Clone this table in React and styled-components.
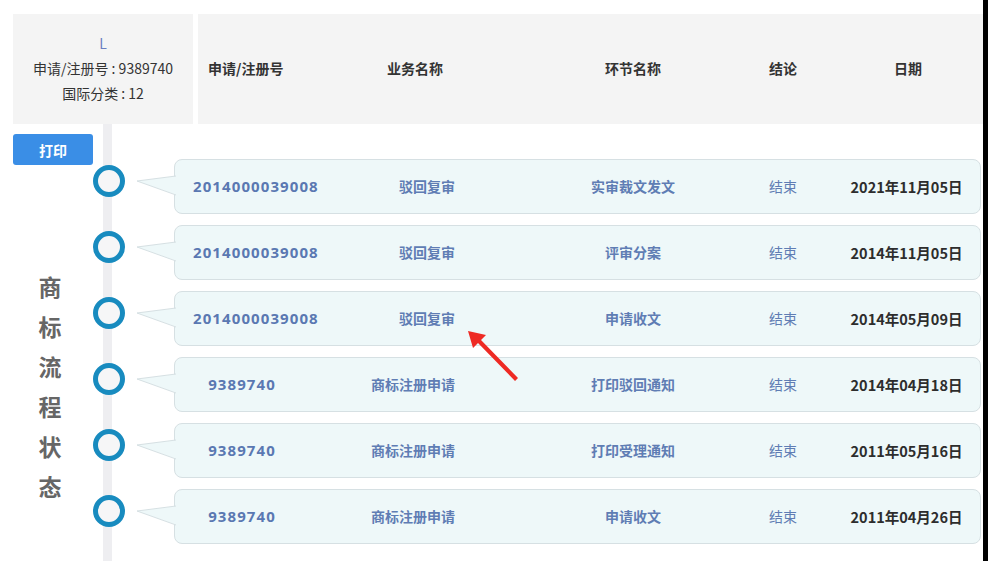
import React from "react";
import styled, { createGlobalStyle } from "styled-components";

const GlobalStyle = createGlobalStyle`
  html, body { margin: 0; padding: 0; background: #fff; }
  body { font-family: "Noto Sans CJK SC", "Noto Sans", sans-serif; color: #333; }
  * { box-sizing: border-box; }
`;

const Page = styled.div`
  width: 988px;
  height: 561px;
  display: flex;
  overflow: hidden;
`;

const Main = styled.div`
  flex: 1;
  padding: 14px 0 0 13px;
  display: flex;
  flex-direction: column;
`;

const EdgeStrip = styled.div`
  width: 5px;
  background: #000;
`;

const HeaderRow = styled.div`
  display: flex;
  gap: 5px;
  height: 110px;
`;

const InfoBox = styled.div`
  width: 180px;
  background: #f4f4f4;
  display: flex;
  flex-direction: column;
  align-items: center;
  justify-content: center;
  font-size: 14px;
  line-height: 25px;
  color: #333;
  padding-bottom: 2px;
`;

const InfoMark = styled.div`
  color: #6c7fc0;
`;

const HeaderGrid = styled.div`
  flex: 1;
  background: #f4f4f4;
  display: grid;
  grid-template-columns: 89px 236px 200px 100px 150px;
  align-items: center;
  padding-left: 10px;
  padding-bottom: 3px;
  font-size: 14px;
  font-weight: 700;
  color: #333;
`;

const HeadCell = styled.div`
  text-align: ${(p) => (p.$left ? "left" : "center")};
  white-space: nowrap;
`;

const Body = styled.div`
  flex: 1;
  display: flex;
`;

const Sidebar = styled.div`
  width: 80px;
  display: flex;
  flex-direction: column;
  align-items: center;
`;

const PrintButton = styled.button`
  width: 80px;
  height: 31px;
  margin-top: 10px;
  border: none;
  border-radius: 3px;
  background: #3a8ee6;
  color: #fff;
  font-family: inherit;
  font-size: 14px;
  font-weight: 700;
  padding: 0;
`;

const VerticalLabel = styled.div`
  margin-top: 101px;
  margin-right: 6px;
  width: 24px;
  font-size: 23px;
  line-height: 40px;
  font-weight: 700;
  color: #666;
  text-align: center;
  word-break: break-all;
`;

const Timeline = styled.div`
  flex: 1;
  padding-top: 35px;
  display: flex;
  flex-direction: column;
  gap: 11px;
  background: linear-gradient(
    to right,
    transparent 10px,
    #eeeef1 10px,
    #eeeef1 19px,
    transparent 19px
  );
`;

const Row = styled.div`
  display: flex;
  align-items: flex-start;
`;

const Marker = styled.div`
  width: 32px;
  height: 32px;
  margin-top: 6px;
  border-radius: 50%;
  border: 5px solid #188bbf;
  background: #f6f6f7;
  flex-shrink: 0;
`;

const Card = styled.div`
  position: relative;
  flex: 1;
  height: 55px;
  margin-left: 49px;
  margin-right: 2px;
  border: 1px solid #d6e0e3;
  border-radius: 8px;
  background: #eef8f9;
  display: grid;
  grid-template-columns: 98px 242px 200px 100px 1fr;
  align-items: center;
  padding-left: 18px;
  padding-bottom: 1px;
  font-size: 14px;
`;

const Tail = styled.svg`
  position: absolute;
  left: -38px;
  top: -1px;
  width: 40px;
  height: 55px;
  overflow: visible;
`;

const NumCell = styled.div`
  text-align: center;
  white-space: nowrap;
  font-family: "Open Sans", "Noto Sans CJK SC", sans-serif;
  font-size: 15px;
  font-weight: 700;
  color: #5a78b2;
  letter-spacing: 1.1px;
`;

const BizCell = styled.div`
  text-align: right;
  padding-right: 78px;
  white-space: nowrap;
  font-weight: 700;
  color: #5f7db4;
`;

const StepCell = styled.div`
  text-align: center;
  white-space: nowrap;
  font-weight: 700;
  color: #5f7db4;
`;

const ResultCell = styled.div`
  text-align: center;
  color: #5f7db4;
`;

const DateCell = styled.div`
  text-align: center;
  white-space: nowrap;
  font-size: 14.5px;
  font-weight: 700;
  color: #2d2d2d;
`;

const rows = [
  ["2014000039008", "驳回复审", "实审裁文发文", "结束", "2021年11月05日"],
  ["2014000039008", "驳回复审", "评审分案", "结束", "2014年11月05日"],
  ["2014000039008", "驳回复审", "申请收文", "结束", "2014年05月09日"],
  ["9389740", "商标注册申请", "打印驳回通知", "结束", "2014年04月18日"],
  ["9389740", "商标注册申请", "打印受理通知", "结束", "2011年05月16日"],
  ["9389740", "商标注册申请", "申请收文", "结束", "2011年04月26日"],
];

const Arrow = styled.svg`
  position: absolute;
  left: 462px;
  top: 327px;
  width: 60px;
  height: 56px;
`;

const Stage = styled.div`
  position: relative;
`;

export default function App() {
  return (
    <>
      <GlobalStyle />
      <Stage>
        <Page>
          <Main>
            <HeaderRow>
              <InfoBox>
                <InfoMark>L</InfoMark>
                <div>申请/注册号 : 9389740</div>
                <div>国际分类 : 12</div>
              </InfoBox>
              <HeaderGrid>
                <HeadCell $left>申请/注册号</HeadCell>
                <HeadCell>业务名称</HeadCell>
                <HeadCell>环节名称</HeadCell>
                <HeadCell>结论</HeadCell>
                <HeadCell>日期</HeadCell>
              </HeaderGrid>
            </HeaderRow>
            <Body>
              <Sidebar>
                <PrintButton>打印</PrintButton>
                <VerticalLabel>商标流程状态</VerticalLabel>
              </Sidebar>
              <Timeline>
                {rows.map((r, i) => (
                  <Row key={i}>
                    <Marker />
                    <Card>
                      <Tail viewBox="0 0 40 55">
                        <polygon points="0,22 40,17 40,36" fill="#eef8f9" />
                        <polyline
                          points="39,17 0,22 39,36"
                          fill="none"
                          stroke="#d6e0e3"
                          strokeWidth="1"
                        />
                      </Tail>
                      <NumCell>{r[0]}</NumCell>
                      <BizCell>{r[1]}</BizCell>
                      <StepCell>{r[2]}</StepCell>
                      <ResultCell>{r[3]}</ResultCell>
                      <DateCell>{r[4]}</DateCell>
                    </Card>
                  </Row>
                ))}
              </Timeline>
            </Body>
          </Main>
          <EdgeStrip />
        </Page>
        <Arrow viewBox="0 0 60 56">
          <polygon points="6,4 24,8 19,13 56,51 53,54 16,16 11,21" fill="#ee2a24" />
        </Arrow>
      </Stage>
    </>
  );
}
